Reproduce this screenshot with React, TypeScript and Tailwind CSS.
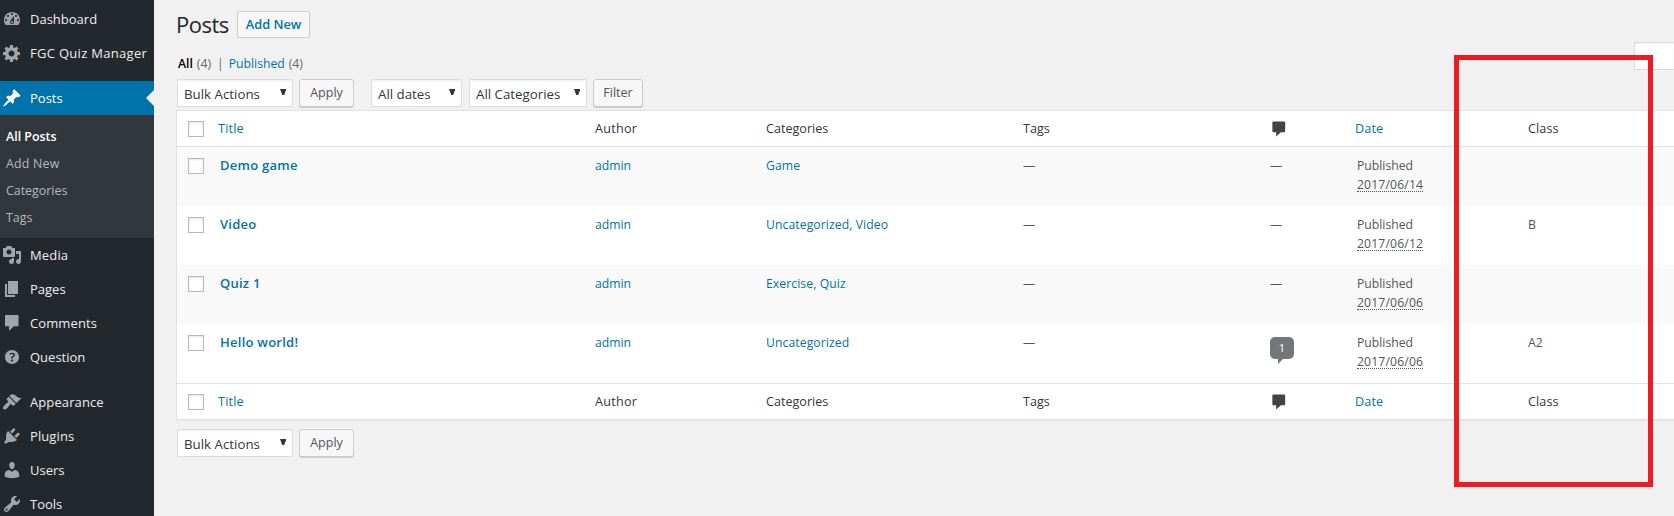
import React from "react";

const ICONS = {
  dashboard:
    "M3.76 16h12.48c1.1-1.37 1.76-3.11 1.76-5 0-4.42-3.58-8-8-8s-8 3.58-8 8c0 1.89.66 3.63 1.76 5zM10 4c.55 0 1 .45 1 1s-.45 1-1 1-1-.45-1-1 .45-1 1-1zM6 6c.55 0 1 .45 1 1s-.45 1-1 1-1-.45-1-1 .45-1 1-1zm8 0c.55 0 1 .45 1 1s-.45 1-1 1-1-.45-1-1 .45-1 1-1zm-5.37 5.55L12 7v6c0 1.1-.9 2-2 2s-2-.9-2-2c0-.57.24-1.08.63-1.45zM4 10c.55 0 1 .45 1 1s-.45 1-1 1-1-.45-1-1 .45-1 1-1zm12 0c.55 0 1 .45 1 1s-.45 1-1 1-1-.45-1-1 .45-1 1-1zm-5 3c0-.55-.45-1-1-1s-1 .45-1 1 .45 1 1 1 1-.45 1-1z",
  generic:
    "M18 12h-2.18c-.17.7-.44 1.35-.81 1.93l1.54 1.54-2.1 2.1-1.54-1.54c-.58.36-1.23.63-1.91.79V19H8v-2.18c-.68-.16-1.33-.43-1.91-.79l-1.54 1.54-2.12-2.12 1.54-1.54c-.36-.58-.63-1.23-.79-1.91H1V9.03h2.17c.16-.7.44-1.35.8-1.94L2.43 5.55l2.1-2.1 1.54 1.54c.58-.37 1.24-.64 1.93-.81V2h3v2.18c.68.16 1.33.43 1.91.79l1.54-1.54 2.12 2.12-1.54 1.54c.36.59.64 1.24.8 1.94H18V12zm-8.5 1.5c1.66 0 3-1.34 3-3s-1.34-3-3-3-3 1.34-3 3 1.34 3 3 3z",
  post: "M10.44 3.02l1.82-1.82 6.36 6.35-1.83 1.82c-1.05-.68-2.48-.57-3.41.36l-.75.75c-.92.93-1.04 2.35-.35 3.41l-1.83 1.82-2.41-2.41-2.8 2.79c-.42.42-3.38 2.71-3.8 2.29s1.86-3.39 2.28-3.81l2.79-2.79L4.1 9.36l1.83-1.82c1.05.69 2.48.57 3.4-.36l.75-.75c.93-.92 1.05-2.35.36-3.41z",
  media:
    "M13 11V4c0-.55-.45-1-1-1h-1.67L9 1H5L3.67 3H2c-.55 0-1 .45-1 1v7c0 .55.45 1 1 1h10c.55 0 1-.45 1-1zM7 4.5c1.38 0 2.5 1.12 2.5 2.5S8.38 9.5 7 9.5 4.5 8.38 4.5 7 5.62 4.5 7 4.5zM14 6h5v10.5c0 1.38-1.12 2.5-2.5 2.5S14 17.88 14 16.5s1.12-2.5 2.5-2.5c.17 0 .34.02.5.05V9h-3V6zm-4 8.05V13h2v3.5c0 1.38-1.12 2.5-2.5 2.5S7 17.88 7 16.5 8.12 14 9.5 14c.17 0 .34.02.5.05z",
  page: "M6 15V2h10v13H6zm-1 1h8v2H3V5h2v11z",
  comment:
    "M4 2h11.5c.6 0 1 .4 1 1v9.3c0 .6-.4 1-1 1H12l-5 4.5v-4.5H4c-.6 0-1-.4-1-1V3c0-.6.4-1 1-1z",
  help: "M17 10c0-3.87-3.14-7-7-7-3.87 0-7 3.13-7 7s3.13 7 7 7c3.86 0 7-3.13 7-7zm-6.3 1.48H9.14v-.43c0-.38.08-.7.24-.98s.46-.57.88-.89c.41-.29.68-.53.81-.71.14-.18.2-.39.2-.62 0-.25-.09-.44-.28-.58-.19-.13-.45-.19-.79-.19-.58 0-1.25.19-2 .57l-.64-1.28c.87-.49 1.8-.74 2.77-.74.81 0 1.45.2 1.92.58.48.39.71.91.71 1.55 0 .43-.09.8-.29 1.11-.19.32-.57.67-1.11 1.06-.38.28-.61.49-.71.63-.1.15-.15.34-.15.57v.35zm-1.47 2.74c-.18-.17-.27-.42-.27-.73 0-.33.08-.58.26-.75s.43-.25.77-.25c.32 0 .57.09.75.26s.27.42.27.74c0 .3-.09.55-.27.72-.18.18-.43.27-.75.27-.33 0-.58-.09-.76-.26z",
  appearance:
    "M14.48 11.06L7.41 3.99l1.5-1.5c.5-.56 2.3-.47 3.51.32 1.21.8 1.43 1.28 2.91 2.1 1.18.64 2.45 1.26 4.45.85zm-.71.71L6.7 4.7 4.93 6.47c-.39.39-.39 1.02 0 1.41l1.06 1.06c.39.39.39 1.03 0 1.42-.6.6-1.43 1.11-2.21 1.69-.35.26-.7.53-1.01.84C1.43 14.23.4 16.08 1.4 17.07c.99 1 2.84-.03 4.18-1.36.31-.31.58-.66.85-1.02.57-.78 1.08-1.61 1.69-2.21.39-.39 1.02-.39 1.41 0l1.06 1.06c.39.39 1.02.39 1.41 0z",
  plugins:
    "M13.11 4.36L9.87 7.6 8 5.73l3.24-3.24c.35-.34 1.05-.2 1.56.32.52.51.66 1.21.31 1.55zm-8 1.77l.91-1.12 9.01 9.01-1.19.84c-.71.71-2.63 1.16-3.82 1.16H6.14L4.9 17.26c-.59.59-1.54.59-2.12 0-.59-.58-.59-1.53 0-2.12l1.24-1.24v-3.88c0-1.13.4-3.19 1.09-3.89zm7.26 3.97l3.24-3.24c.34-.35 1.04-.21 1.55.31.52.51.66 1.21.31 1.55l-3.24 3.25z",
  users:
    "M10 9.25c-2.27 0-2.73-3.44-2.73-3.44C7 4.02 7.82 2 9.97 2c2.16 0 2.98 2.02 2.71 3.81 0 0-.41 3.44-2.68 3.44zm0 2.57L12.72 10c2.39 0 4.52 2.33 4.52 4.53v2.49s-3.65 1.13-7.24 1.13c-3.65 0-7.24-1.13-7.24-1.13v-2.49c0-2.25 1.94-4.48 4.47-4.48z",
  tools:
    "M16.68 9.77c-1.34 1.34-3.3 1.67-4.95.99l-5.41 6.52c-.99.99-2.59.99-3.58 0s-.99-2.59 0-3.57l6.52-5.42c-.68-1.65-.35-3.61.99-4.95 1.28-1.28 3.12-1.62 4.72-1.06l-2.89 2.89 2.82 2.82 2.86-2.87c.53 1.58.18 3.39-1.08 4.65zM3.81 16.21c.4.39 1.04.39 1.43 0 .4-.4.4-1.04 0-1.43-.39-.4-1.03-.4-1.43 0-.39.39-.39 1.03 0 1.43z",
};

type IconName = keyof typeof ICONS;

function Icon({ name, className = "" }: { name: IconName; className?: string }) {
  return (
    <svg viewBox="0 0 20 20" className={`size-5 shrink-0 fill-current ${className}`}>
      <path d={ICONS[name]} fillRule="evenodd" />
    </svg>
  );
}

function MenuItem({ icon, label, active, spacing = "" }: { icon: IconName; label: string; active?: boolean; spacing?: string }) {
  return (
    <li
      className={`relative flex h-[34px] items-center gap-2 pl-0.5 text-[13px] ${
        active ? "bg-[#0073aa] text-white" : "text-[#eeeeee]"
      }`}
    >
      <Icon name={icon} className={active ? "text-white" : "text-[#a0a5aa]"} />
      <span className={`pt-0.5 whitespace-nowrap ${spacing}`}>{label}</span>
      {active && (
        <span className="absolute top-[9px] right-0 border-y-8 border-r-8 border-y-transparent border-r-[#f1f1f1]" />
      )}
    </li>
  );
}

function Sidebar() {
  return (
    <nav className="h-full w-[154px] shrink-0 overflow-hidden bg-[#23282d] pt-0.5">
      <ul>
        <MenuItem icon="dashboard" label="Dashboard" />
        <MenuItem icon="generic" label="FGC Quiz Manager" spacing="tracking-[0.3px]" />
      </ul>
      <ul className="mt-[11px]">
        <MenuItem icon="post" label="Posts" active />
        <li className="bg-[#32373c] pt-2 pb-[7px]">
          <ul className="pl-1.5 text-[12.4px] leading-[27px] text-[#b4b9be]">
            <li className="font-semibold text-white">All Posts</li>
            <li className="tracking-[0.2px]">Add New</li>
            <li>Categories</li>
            <li>Tags</li>
          </ul>
        </li>
        <MenuItem icon="media" label="Media" spacing="tracking-[0.15px]" />
        <MenuItem icon="page" label="Pages" />
        <MenuItem icon="comment" label="Comments" spacing="tracking-[0.1px]" />
        <MenuItem icon="help" label="Question" />
      </ul>
      <ul className="mt-[11px]">
        <MenuItem icon="appearance" label="Appearance" spacing="tracking-[0.1px]" />
        <MenuItem icon="plugins" label="Plugins" spacing="tracking-[0.1px]" />
        <MenuItem icon="users" label="Users" />
        <MenuItem icon="tools" label="Tools" />
      </ul>
    </nav>
  );
}

function Select({ label, width }: { label: string; width: string }) {
  return (
    <div
      className={`flex h-7 items-center justify-between border border-[#dddddd] bg-white pr-1.5 pl-1.5 text-[13.3px] text-[#32373c] shadow-[inset_0_1px_2px_rgba(0,0,0,0.07)] ${width}`}
    >
      <span className="pt-[3px] whitespace-nowrap">{label}</span>
      <svg viewBox="0 0 7 7" className="mb-0.5 size-[6.5px] fill-[#32373c]">
        <path d="M0 0h7L4.4 6.8H2.6z" />
      </svg>
    </div>
  );
}

function Button({ label, width }: { label: string; width: string }) {
  return (
    <button
      className={`h-7 rounded-[3px] border border-[#cccccc] bg-[#f7f7f7] pt-px text-[12.5px] text-[#555555] shadow-[0_1px_0_#cccccc] ${width}`}
    >
      {label}
    </button>
  );
}

function Checkbox({ className = "" }: { className?: string }) {
  return (
    <span
      className={`ml-[11px] block size-4 border border-[#b4b9be] bg-white shadow-[inset_0_1px_2px_rgba(0,0,0,0.1)] ${className}`}
    />
  );
}

const COLUMNS = "grid grid-cols-[41px_377px_171px_257px_246px_86px_173px_1fr]";

function HeadingRow({ className = "" }: { className?: string }) {
  return (
    <div className={`${COLUMNS} h-[35px] items-center text-[12.6px] text-[#32373c] ${className}`}>
      <Checkbox />
      <span className="pt-0.5 tracking-[0.2px] text-[#0073aa]">Title</span>
      <span className="pt-0.5 tracking-[0.25px]">Author</span>
      <span className="pt-0.5">Categories</span>
      <span className="pt-0.5">Tags</span>
      <Icon name="comment" className="scale-95 text-[#444444]" />
      <span className="pt-0.5 tracking-[0.15px] text-[#0073aa]">Date</span>
      <span className="pt-0.5 tracking-[0.1px]">Class</span>
    </div>
  );
}

type Post = { title: string; categories: string; date: string; comments?: number; level?: string };

const POSTS: Post[] = [
  { title: "Demo game", categories: "Game", date: "2017/06/14" },
  { title: "Video", categories: "Uncategorized, Video", date: "2017/06/12", level: "B" },
  { title: "Quiz 1", categories: "Exercise, Quiz", date: "2017/06/06" },
  { title: "Hello world!", categories: "Uncategorized", date: "2017/06/06", comments: 1, level: "A2" },
];

function PostRow({ post, striped }: { post: Post; striped: boolean }) {
  return (
    <div
      className={`${COLUMNS} h-[59px] items-start pt-[9px] text-[12.2px] leading-[19px] text-[#555555] ${
        striped ? "bg-[#f9f9f9]" : "bg-white"
      }`}
    >
      <Checkbox className="mt-0.5" />
      <span className="pl-0.5 text-[13px] font-semibold tracking-[0.25px] text-[#0073aa]">{post.title}</span>
      <span className="text-[#0073aa]">admin</span>
      <span className="tracking-[0.08px] text-[#0073aa]">{post.categories}</span>
      <span>—</span>
      {post.comments ? (
        <span className="relative mt-1 ml-px block h-[22px] w-6 rounded-[5px] bg-[#72777c] text-center text-[11px] leading-[22px] text-white">
          {post.comments}
          <svg viewBox="0 0 5 5" className="absolute top-[22px] left-2 size-[5px] fill-[#72777c]">
            <path d="M0 0h5L0 5z" />
          </svg>
        </span>
      ) : (
        <span className="pl-px">—</span>
      )}
      <div className="flex flex-col items-start pl-0.5">
        <span>Published</span>
        <span className="relative tracking-[0.15px]">
          {post.date}
          <span className="absolute inset-x-0 bottom-0.5 border-b border-dotted border-[#555555]" />
        </span>
      </div>
      <span>{post.level}</span>
    </div>
  );
}

export default function App() {
  return (
    <div className="relative flex h-[516px] w-[1674px] overflow-hidden bg-[#f1f1f1] font-['Open_Sans','Noto_Sans',sans-serif]">
      <Sidebar />
      <main className="min-w-0 flex-1 pt-[11px] pl-[22px]">
        <header className="flex h-7 items-start">
          <h1 className="w-[61px] text-[22px] leading-[27px] font-normal tracking-[-0.5px] text-[#23282d]">Posts</h1>
          <button className="h-[27px] w-[73px] rounded-[2px] border border-[#cccccc] bg-[#f7f7f7] pt-px text-[12.8px] font-semibold text-[#0073aa]">
            Add New
          </button>
        </header>

        <div className="flex h-10 justify-between">
          <div className="mt-[15px] flex h-5 items-center pl-0.5 text-[12.2px] text-[#666666]">
            <span className="mr-1 font-semibold text-black">All</span>
            <span>(4)</span>
            <span className="mr-[5px] ml-1.5">|</span>
            <span className="mr-1 text-[#0073aa]">Published</span>
            <span>(4)</span>
          </div>
          <div className="mt-[3px] h-7 w-10 border border-r-0 border-[#dddddd] bg-white shadow-[inset_0_1px_2px_rgba(0,0,0,0.07)]" />
        </div>

        <div className="flex h-[31px] items-start pl-px">
          <Select label="Bulk Actions" width="w-[116px]" />
          <Button label="Apply" width="ml-1.5 w-[55px]" />
          <Select label="All dates" width="ml-[17px] w-[91px]" />
          <Select label="All Categories" width="ml-[7px] w-[118px]" />
          <Button label="Filter" width="ml-1.5 w-[50px]" />
        </div>

        <section className="border border-r-0 border-[#e1e1e1] bg-white shadow-[0_1px_1px_rgba(0,0,0,0.04)]">
          <HeadingRow className="box-content border-b border-[#e1e1e1]" />
          {POSTS.map((post, i) => (
            <PostRow key={post.title} post={post} striped={i % 2 === 0} />
          ))}
          <HeadingRow className="box-content border-t border-[#e1e1e1]" />
        </section>

        <div className="mt-[9px] flex items-start pl-px">
          <Select label="Bulk Actions" width="w-[116px]" />
          <Button label="Apply" width="ml-1.5 w-[55px]" />
        </div>
      </main>
      <div className="pointer-events-none absolute top-[55px] left-[1454px] h-[432px] w-[199px] border-[5px] border-[#ed1c24]" />
    </div>
  );
}
